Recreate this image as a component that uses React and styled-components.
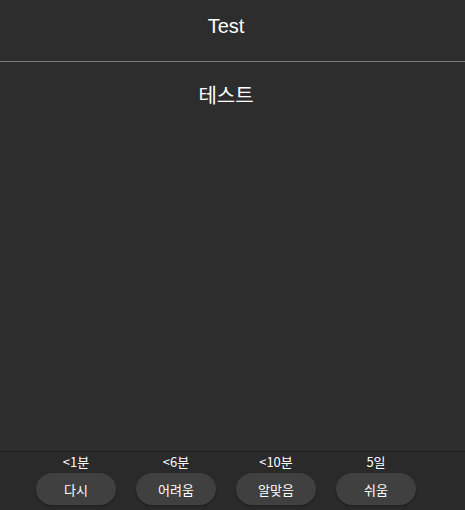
import styled, { createGlobalStyle } from "styled-components"

const Global = createGlobalStyle`
    html, body {
        margin: 0;
        padding: 0;
        background: #2d2d2d;
    }
    body {
        font-family: "Liberation Sans", Arial, "Noto Sans CJK KR", sans-serif;
        color: #ffffff;
    }
`

const Screen = styled.div`
    height: 510px;
    display: flex;
    flex-direction: column;
    background: #2d2d2d;
`

const Header = styled.header`
    height: 62px;
    border-bottom: 1px solid #7b7b7b;
    display: flex;
    justify-content: center;
    padding: 14px 13px 0 0;
    box-sizing: border-box;
`

const Title = styled.h1`
    margin: 0;
    font-size: 20px;
    font-weight: 400;
    line-height: 24px;
`

const Body = styled.main`
    flex: 1;
    display: flex;
    flex-direction: column;
    align-items: center;
    padding: 19px 13px 0 0;
`

const Front = styled.div`
    font-family: "Noto Sans CJK KR", sans-serif;
    font-size: 20px;
    line-height: 28px;
`

const Footer = styled.footer`
    border-top: 1px solid #1f1f1f;
    background: #2a2a2a;
    display: flex;
    justify-content: center;
    gap: 20px;
    padding: 1px 13px 5px 0;
`

const Choice = styled.div`
    width: 80px;
    display: flex;
    flex-direction: column;
    align-items: center;
    gap: 2px;
`

const Interval = styled.span`
    font-family: "Noto Sans CJK KR", sans-serif;
    font-size: 13px;
    line-height: 18px;
`

const Btn = styled.button`
    width: 80px;
    height: 32px;
    border: none;
    border-radius: 16px;
    background: #404040;
    color: #ffffff;
    font-family: "Noto Sans CJK KR", sans-serif;
    font-size: 13px;
    box-shadow: 0 1px 2px rgba(0, 0, 0, 0.35);
    cursor: pointer;
`

function App(){

    const choices = [
        { time: '<1분', label: '다시' },
        { time: '<6분', label: '어려움' },
        { time: '<10분', label: '알맞음' },
        { time: '5일', label: '쉬움' }
    ]

    return(
        <Screen>
            <Global />
            <Header>
                <Title>Test</Title>
            </Header>
            <Body>
                <Front>테스트</Front>
            </Body>
            <Footer>
                {
                    choices.map(
                        (c, index)=>(
                            <Choice key={index}>
                                <Interval>{c.time}</Interval>
                                <Btn>{c.label}</Btn>
                            </Choice>
                        )
                    )
                }
            </Footer>
        </Screen>
    )
}
export default App
